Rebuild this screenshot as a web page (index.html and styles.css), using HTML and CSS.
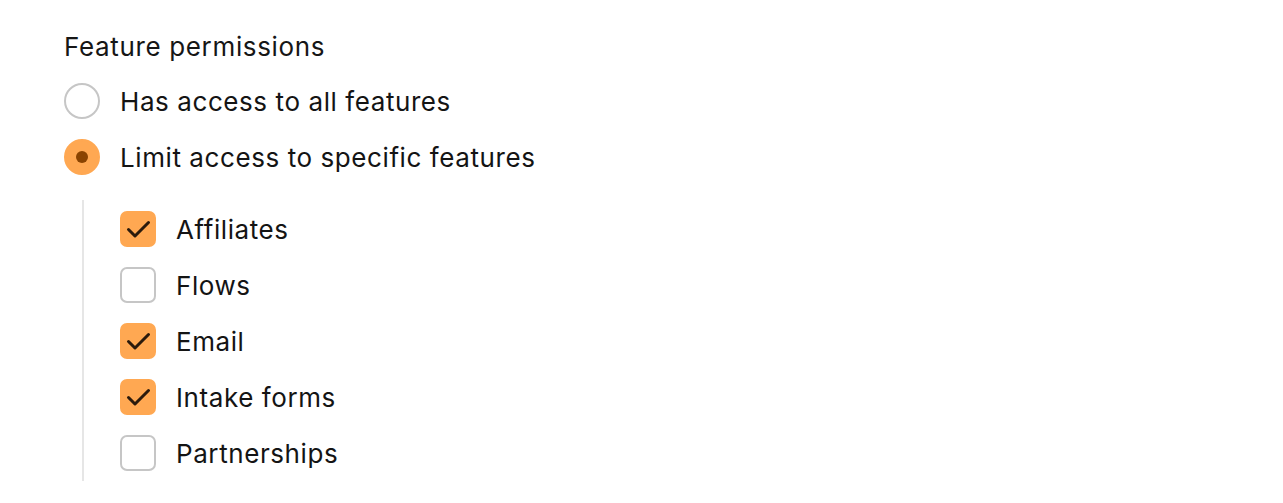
FILE: index.html
```html
<!DOCTYPE html>
<html>
<head>
<meta charset="utf-8">
<link rel="stylesheet" href="styles.css">
</head>
<body>
<div class="panel">
  <div class="title">Feature permissions</div>
  <div class="radios">
    <label class="row"><span class="radio"></span><span class="label">Has access to all features</span></label>
    <label class="row"><span class="radio checked"><span class="dot"></span></span><span class="label">Limit access to specific features</span></label>
  </div>
  <div class="nested">
    <label class="row"><span class="box checked"><svg class="check" viewBox="0 0 36 36" width="36" height="36"><path d="M8.5 18.5l6.5 6.5L28.5 11.5"/></svg></span><span class="label">Affiliates</span></label>
    <label class="row"><span class="box"></span><span class="label">Flows</span></label>
    <label class="row"><span class="box checked"><svg class="check" viewBox="0 0 36 36" width="36" height="36"><path d="M8.5 18.5l6.5 6.5L28.5 11.5"/></svg></span><span class="label">Email</span></label>
    <label class="row"><span class="box checked"><svg class="check" viewBox="0 0 36 36" width="36" height="36"><path d="M8.5 18.5l6.5 6.5L28.5 11.5"/></svg></span><span class="label">Intake forms</span></label>
    <label class="row"><span class="box"></span><span class="label">Partnerships</span></label>
  </div>
</div>
</body>
</html>
```
FILE: styles.css
```css
html, body {
  margin: 0;
  padding: 0;
  background: #ffffff;
}
body {
  font-family: Inter, "Noto Sans", sans-serif;
  color: #111111;
}
.panel {
  padding: 31px 64px 0 64px;
  display: flex;
  flex-direction: column;
}
.title {
  font-size: 26px;
  line-height: 32px;
  height: 32px;
  letter-spacing: 0.65px;
  color: #161616;
}
.radios {
  margin-top: 20px;
  display: flex;
  flex-direction: column;
  gap: 20px;
}
.row {
  display: flex;
  align-items: center;
  gap: 20px;
  height: 36px;
}
.label {
  font-size: 26px;
  line-height: 32px;
  padding-top: 2px;
  letter-spacing: 0.58px;
  color: #141414;
}
.radio {
  box-sizing: border-box;
  width: 36px;
  height: 36px;
  border-radius: 50%;
  border: 2px solid #c6c6c6;
  display: flex;
  align-items: center;
  justify-content: center;
  flex: none;
}
.radio.checked {
  background: #ffa852;
  border-color: #ffa852;
}
.dot {
  width: 12px;
  height: 12px;
  border-radius: 50%;
  background: #8a4300;
}
.nested {
  margin-top: 25px;
  margin-left: 18px;
  border-left: 2px solid #e6e6e6;
  padding: 11px 0 10px 36px;
  display: flex;
  flex-direction: column;
  gap: 20px;
}
.box {
  box-sizing: border-box;
  position: relative;
  width: 36px;
  height: 36px;
  border-radius: 7px;
  border: 2px solid #c6c6c6;
  flex: none;
}
.box.checked {
  background: #ffa852;
  border-color: #ffa852;
}
.check {
  position: absolute;
  left: -2px;
  top: -2px;
}
.check path {
  fill: none;
  stroke: #2b1a0c;
  stroke-width: 3;
  stroke-linecap: round;
  stroke-linejoin: round;
}
```
